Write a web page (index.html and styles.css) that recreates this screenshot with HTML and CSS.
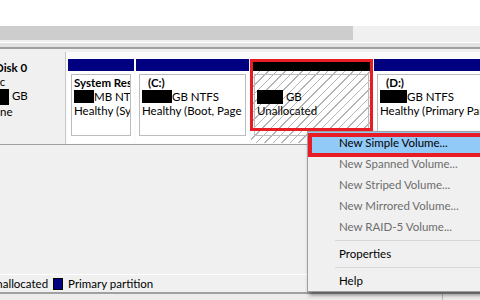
FILE: index.html
```html
<!DOCTYPE html>
<html>
<head>
<meta charset="utf-8">
<title>Disk Management</title>
<link rel="stylesheet" href="styles.css">
</head>
<body>
<div class="upper"></div>
<div class="hscroll"><div class="thumb"></div></div>
<div class="splitter">
  <div class="sp sp1"></div><div class="sp sp2"></div><div class="sp sp3"></div><div class="sp sp4"></div><div class="sp sp5"></div>
</div>
<div class="disk-row">
  <div class="disk-label">
    <div class="dl-inner">
      <div class="dl-title">Disk 0</div>
      <div>Basic</div>
      <div><span class="redact rd-disk"></span> GB</div>
      <div>Online</div>
    </div>
  </div>
  <div class="volumes">
    <div class="vol vol-sys">
      <div class="bar"></div>
      <div class="body">
        <div class="inner">
          <div class="name">System Reserved</div>
          <div><span class="redact rd-sys"></span>MB NTFS</div>
          <div>Healthy (System, Active, Primary Partition)</div>
        </div>
      </div>
    </div>
    <div class="vol vol-c">
      <div class="bar"></div>
      <div class="body">
        <div class="inner">
          <div class="name drive">(C:)</div>
          <div><span class="redact rd-c"></span>GB NTFS</div>
          <div>Healthy (Boot, Page File, Crash Dump, Primary Partition)</div>
        </div>
      </div>
    </div>
    <div class="vol vol-un">
      <div class="bar bar-black"></div>
      <div class="body hatch">
        <div class="inner inner-un">
          <div class="name">&nbsp;</div>
          <div><span class="redact rd-un"></span> GB</div>
          <div>Unallocated</div>
        </div>
      </div>
    </div>
    <div class="vol vol-d">
      <div class="bar"></div>
      <div class="body">
        <div class="inner">
          <div class="name drive">(D:)</div>
          <div><span class="redact rd-d"></span>GB NTFS</div>
          <div>Healthy (Primary Partition)</div>
        </div>
      </div>
    </div>
  </div>
</div>
<div class="empty"></div>
<div class="legend">
  <div class="legend-inner">
    <span class="sw sw-un"></span><span class="lg-text">Unallocated</span>
    <span class="sw sw-primary"></span><span class="lg-text">Primary partition</span>
  </div>
</div>
<div class="status"><div class="status-cell"></div></div>

<div class="menu">
  <div class="mi hl">New Simple Volume...</div>
  <div class="mi dis">New Spanned Volume...</div>
  <div class="mi dis">New Striped Volume...</div>
  <div class="mi dis">New Mirrored Volume...</div>
  <div class="mi dis">New RAID-5 Volume...</div>
  <div class="msep"></div>
  <div class="mi">Properties</div>
  <div class="msep"></div>
  <div class="mi">Help</div>
</div>

<div class="annot annot-unalloc"></div>
<div class="annot annot-menu"></div>
</body>
</html>
```

FILE: styles.css
```css
* { box-sizing: border-box; }
html, body { margin: 0; padding: 0; }
body {
  width: 480px;
  height: 300px;
  overflow: hidden;
  position: relative;
  background: #f0f0f0;
  font-family: Lato, "Noto Sans", sans-serif;
  font-size: 11.5px;
  color: #000;
}

.upper { height: 26px; background: #fff; }
.hscroll { height: 14px; background: #f0f0f0; }
.thumb { width: 353px; height: 100%; background: #cdcdcd; }

.splitter { display: flex; flex-direction: column; }
.sp1 { height: 2px; background: #f0f0f0; }
.sp2 { height: 1px; background: #fff; }
.sp3 { height: 4px; background: #e3e3e3; }
.sp4 { height: 2px; background: #a0a0a0; }
.sp5 { height: 3px; background: #f0f0f0; }

.disk-row {
  display: flex;
  height: 93px;
  border-bottom: 1px solid #a0a0a0;
}
.disk-label {
  flex: none;
  width: 66px;
  background: #f0f0f0;
  border-right: 1px solid #c8c8c8;
  padding-top: 9px;
  line-height: 14px;
  overflow: hidden;
}
.dl-inner { margin-left: -21px; white-space: nowrap; }
.dl-title { font-weight: bold; padding-left: 16px; }

.volumes {
  flex: 1;
  min-width: 0;
  display: flex;
  gap: 2px;
  padding: 7px 0 0 2px;
  background: #fbfbfb;
  overflow: hidden;
}
.vol { flex: none; height: 84px; display: flex; flex-direction: column; }
.vol-sys { width: 66px; }
.vol-c { width: 113px; }
.vol-un { width: 121px; }
.vol-d { width: 140px; }

.bar { flex: none; height: 12px; background: #000080; }
.bar-black { background: #000; }

.body {
  flex: 1;
  display: flex;
  background: #fff;
  padding: 3px 3px 7px 3px;
}
.hatch {
  background:
    repeating-linear-gradient(135deg, #b4b4b4 0, #b4b4b4 1px, transparent 1px, transparent 6px),
    #fff;
}
.inner {
  flex: 1;
  min-width: 0;
  border: 1px solid #bcbcbc;
  padding: 1px 2px;
  line-height: 14px;
  white-space: nowrap;
  overflow: hidden;
  background: #fff;
}
.inner-un { background: transparent; }
.name { font-weight: bold; }
.name.drive { padding-left: 6px; }

.redact {
  display: inline-block;
  background: #000;
  height: 13px;
  vertical-align: top;
}
.rd-disk { width: 30px; height: 16px; }
.rd-sys { width: 20px; }
.rd-c { width: 30px; }
.rd-un { width: 26px; height: 14px; }
.rd-d { width: 27px; }

.empty { height: 129px; }

.legend {
  height: 18px;
  border-top: 1px solid #fff;
  display: flex;
  align-items: center;
  white-space: nowrap;
}
.legend-inner { display: flex; align-items: center; margin-left: -27px; }
.sw { display: inline-block; width: 10px; height: 12px; border: 1px solid #000; background: #000; }
.sw-primary { background: #000080; margin-left: 5px; }
.lg-text { margin-left: 5px; }

.status {
  height: 8px;
  border-top: 2px solid #a0a0a0;
  background: #ececec;
}
.status-cell { width: 443px; height: 100%; border-right: 1px solid #b8b8b8; }

.menu {
  position: absolute;
  left: 307px;
  top: 131px;
  width: 190px;
  background: #f0f0f0;
  border: 1px solid #a0a0a0;
  box-shadow: 2px 3px 4px rgba(0, 0, 0, 0.45);
}
.mi {
  height: 21px;
  line-height: 21px;
  padding-left: 31px;
  white-space: nowrap;
  color: #000;
}
.mi.dis { color: #6d6d6d; }
.mi.hl { background: #91c9f7; }
.msep {
  height: 6px;
  display: flex;
  align-items: center;
  padding-left: 27px;
}
.msep::after { content: ""; flex: 1; height: 1px; background: #d7d7d7; }

.annot {
  position: absolute;
  border: 3px solid #e81c24;
  pointer-events: none;
}
.annot-unalloc { left: 250px; top: 59px; width: 123px; height: 72px; }
.annot-menu { left: 308px; top: 133px; width: 200px; height: 24px; border-width: 4px; }
```
